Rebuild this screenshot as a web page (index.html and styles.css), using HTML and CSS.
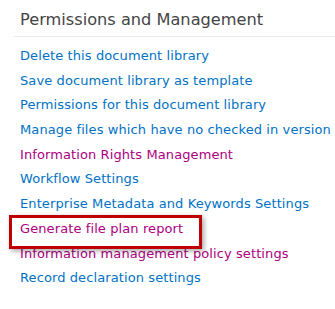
FILE: index.html
```html
<!DOCTYPE html>
<html lang="en">
<head>
    <meta charset="UTF-8">
    <title>Permissions and Management</title>
    <link rel="stylesheet" href="styles.css">
</head>
<body>
    <div class="section">
        <h3 class="section-title">Permissions and Management</h3>
        <ul class="link-list">
            <li><a href="#">Delete this document library</a></li>
            <li><a href="#">Save document library as template</a></li>
            <li><a href="#">Permissions for this document library</a></li>
            <li><a href="#">Manage files which have no checked in version</a></li>
            <li><a href="#" class="visited">Information Rights Management</a></li>
            <li><a href="#">Workflow Settings</a></li>
            <li><a href="#">Enterprise Metadata and Keywords Settings</a></li>
            <li class="highlight"><a href="#" class="visited">Generate file plan report</a></li>
            <li><a href="#" class="visited">Information management policy settings</a></li>
            <li><a href="#">Record declaration settings</a></li>
        </ul>
    </div>
</body>
</html>
```

FILE: styles.css
```css
* {
    margin: 0;
    padding: 0;
    box-sizing: border-box;
}

body {
    background: #fff;
    font-family: 'DejaVu Sans', Verdana, sans-serif;
    overflow: hidden;
}

.section {
    padding-top: 10px;
}

.section-title {
    margin-left: 14px;
    padding: 0 0 6px 6px;
    border-bottom: 1px solid #ebebeb;
    font-size: 16.2px;
    font-weight: normal;
    color: #444;
    line-height: 20px;
}

.link-list {
    list-style: none;
    padding: 7px 0 0 20px;
}

.link-list li {
    height: 24.7px;
    line-height: 24.7px;
    font-size: 13px;
    letter-spacing: 0.1px;
    white-space: nowrap;
}

.link-list a {
    color: #0072c6;
    text-decoration: none;
}

.link-list a.visited {
    color: #ac0080;
}

.link-list li.highlight {
    position: relative;
}

.link-list li.highlight::before {
    content: "";
    position: absolute;
    left: -11px;
    top: -2px;
    width: 187px;
    height: 28px;
    border: 3px solid #c00000;
    box-shadow: 2px 2px 5px rgba(0, 0, 0, 0.35);
}
```
